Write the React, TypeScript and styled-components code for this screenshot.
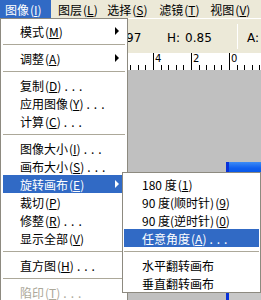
import styled, { createGlobalStyle } from "styled-components";

const GlobalStyle = createGlobalStyle`
  html, body {
    margin: 0;
    padding: 0;
    width: 261px;
    height: 300px;
    overflow: hidden;
    background: #c0c0c0;
  }
  body {
    font-family: "Noto Sans CJK SC", "Liberation Sans", sans-serif;
    font-size: 12px;
  }
`;

type Item =
  | { sep: true }
  | { label: string; key?: string; dots?: boolean; arrow?: boolean; active?: boolean; disabled?: boolean };

const mainItems: Item[] = [
  { label: "模式", key: "M", arrow: true },
  { sep: true },
  { label: "调整", key: "A", arrow: true },
  { sep: true },
  { label: "复制", key: "D", dots: true },
  { label: "应用图像", key: "Y", dots: true },
  { label: "计算", key: "C", dots: true },
  { sep: true },
  { label: "图像大小", key: "I", dots: true },
  { label: "画布大小", key: "S", dots: true },
  { label: "旋转画布", key: "E", arrow: true, active: true },
  { label: "裁切", key: "P" },
  { label: "修整", key: "R", dots: true },
  { label: "显示全部", key: "V" },
  { sep: true },
  { label: "直方图", key: "H", dots: true },
  { sep: true },
  { label: "陷印", key: "T", dots: true, disabled: true },
];

const subItems: Item[] = [
  { label: "180 度", key: "1" },
  { label: "90 度(顺时针)", key: "9" },
  { label: "90 度(逆时针)", key: "0" },
  { label: "任意角度", key: "A", dots: true, active: true },
  { sep: true },
  { label: "水平翻转画布" },
  { label: "垂直翻转画布" },
];

const bar = [
  { label: "图像", key: "I", w: 54, pad: 5, active: true },
  { label: "图层", key: "L", w: 53, pad: 7 },
  { label: "选择", key: "S", w: 55, pad: 6 },
  { label: "滤镜", key: "T", w: 54, pad: 6 },
  { label: "视图", key: "V", w: 60, pad: 6 },
];

function MenuList({ items }: { items: Item[] }) {
  return (
    <>
      {items.map((it, i) =>
        "sep" in it ? (
          <Separator key={i} />
        ) : (
          <Row key={i} $active={it.active} $disabled={it.disabled}>
            <span>{it.label}</span>
            {it.key && (
              <Mnemonic>
                (<u>{it.key}</u>)
              </Mnemonic>
            )}
            {it.dots && <Dots>...</Dots>}
            {it.arrow && <Arrow $active={it.active} />}
          </Row>
        )
      )}
    </>
  );
}

function Ruler() {
  const ticks = [];
  for (let k = -4; k <= 14; k++) {
    const x = 153 + k * 7.6;
    const major = k % 5 === 0;
    ticks.push(
      <line
        key={k}
        x1={Math.round(x) + 0.5}
        x2={Math.round(x) + 0.5}
        y1={major ? 0 : 12}
        y2={17}
        stroke="#000"
        strokeWidth={1}
      />
    );
  }
  return (
    <RulerBar>
      <svg width="261" height="17">
        {ticks}
        <text x="155" y="9" fontSize="10" fontFamily="DejaVu Sans, sans-serif">4</text>
        <text x="193" y="9" fontSize="10" fontFamily="DejaVu Sans, sans-serif">2</text>
        <text x="231" y="9" fontSize="10" fontFamily="DejaVu Sans, sans-serif">0</text>
      </svg>
    </RulerBar>
  );
}

export default function App() {
  return (
    <Screen>
      <GlobalStyle />
      <MenuBar>
        {bar.map((b) => (
          <BarItem key={b.label} $w={b.w} $pad={b.pad} $active={b.active}>
            {b.label}
            <Mnemonic>
              (<u>{b.key}</u>)
            </Mnemonic>
          </BarItem>
        ))}
      </MenuBar>
      <Toolbar>
        <Field $w={41}>97</Field>
        <Field $w={70}>
          H:<Value>0.85</Value>
        </Field>
        <VSep />
        <Field $w={20} style={{ marginLeft: 9 }}>A:</Field>
      </Toolbar>
      <Ruler />
      <Canvas>
        <DocWindow>
          <TitleBar />
        </DocWindow>
      </Canvas>

      <MainMenu>
        <MenuList items={mainItems} />
      </MainMenu>
      <SubMenu>
        <MenuList items={subItems} />
      </SubMenu>
    </Screen>
  );
}

const Screen = styled.div`
  position: relative;
  width: 261px;
  height: 300px;
  overflow: hidden;
  display: flex;
  flex-direction: column;
  background: #c0c0c0;
`;

const MenuBar = styled.div`
  height: 18px;
  flex-shrink: 0;
  display: flex;
  background: #ece9d8;
`;

const BarItem = styled.div<{ $w: number; $pad: number; $active?: boolean }>`
  width: ${(p) => p.$w}px;
  padding-left: ${(p) => p.$pad}px;
  box-sizing: border-box;
  height: 18px;
  display: flex;
  align-items: center;
  white-space: nowrap;
  color: ${(p) => (p.$active ? "#fff" : "#000")};
  background: ${(p) => (p.$active ? "#316ac5" : "transparent")};
`;

const Mnemonic = styled.span`
  margin-left: 1px;
  u {
    text-underline-offset: 1px;
  }
`;

const Dots = styled.span`
  margin-left: 3px;
  letter-spacing: 4px;
`;

const Toolbar = styled.div`
  height: 35px;
  flex-shrink: 0;
  display: flex;
  align-items: center;
  padding-left: 126px;
  background: #ece9d8;
  border-top: 1px solid #fff;
  box-sizing: border-box;
  font-family: "DejaVu Sans", "Liberation Sans", sans-serif;
  font-size: 12px;
  color: #000;
  padding-top: 3px;
`;

const Field = styled.div<{ $w: number }>`
  width: ${(p) => p.$w}px;
  flex-shrink: 0;
  white-space: nowrap;
`;

const Value = styled.span`
  margin-left: 5px;
`;

const VSep = styled.div`
  width: 1px;
  height: 25px;
  background: #aca899;
  border-right: 1px solid #fff;
  margin-top: -3px;
`;

const RulerBar = styled.div`
  height: 17px;
  flex-shrink: 0;
  background: #fff;
  svg {
    display: block;
  }
`;

const Canvas = styled.div`
  flex: 1;
  position: relative;
  background: #c0c0c0;
`;

const DocWindow = styled.div`
  position: absolute;
  left: 226px;
  top: 92px;
  width: 40px;
  height: 160px;
  border-left: 3px solid #0831d9;
  background: #c8c8c8;
`;

const TitleBar = styled.div`
  height: 24px;
  background: linear-gradient(#3d8cf6 0, #1160ee 25%, #0050e4 60%, #0a4fd8 100%);
`;

const MainMenu = styled.div`
  position: absolute;
  left: 0;
  top: 18px;
  width: 128px;
  height: 300px;
  box-sizing: border-box;
  border: 1px solid #8d8a80;
  background: #fff;
  padding: 3px 2px;
`;

const SubMenu = styled.div`
  position: absolute;
  left: 122px;
  top: 172px;
  width: 139px;
  box-sizing: border-box;
  border: 1px solid #8d8a80;
  background: #fff;
  padding: 2px 1px 0;
`;

const Row = styled.div<{ $active?: boolean; $disabled?: boolean }>`
  height: 18px;
  display: flex;
  align-items: center;
  padding-left: 17px;
  white-space: nowrap;
  color: ${(p) => (p.$active ? "#fff" : p.$disabled ? "#aca899" : "#000")};
  background: ${(p) => (p.$active ? "#316ac5" : "transparent")};
  ${SubMenu} & {
    padding-left: 18px;
  }
`;

const Arrow = styled.span<{ $active?: boolean }>`
  margin-left: auto;
  margin-right: 6px;
  width: 0;
  height: 0;
  border-top: 4px solid transparent;
  border-bottom: 4px solid transparent;
  border-left: 4px solid ${(p) => (p.$active ? "#fff" : "#000")};
`;

const Separator = styled.div`
  height: 9px;
  position: relative;
  &::after {
    content: "";
    position: absolute;
    left: 0;
    right: 0;
    top: 4px;
    height: 1px;
    background: #aca899;
  }
`;
